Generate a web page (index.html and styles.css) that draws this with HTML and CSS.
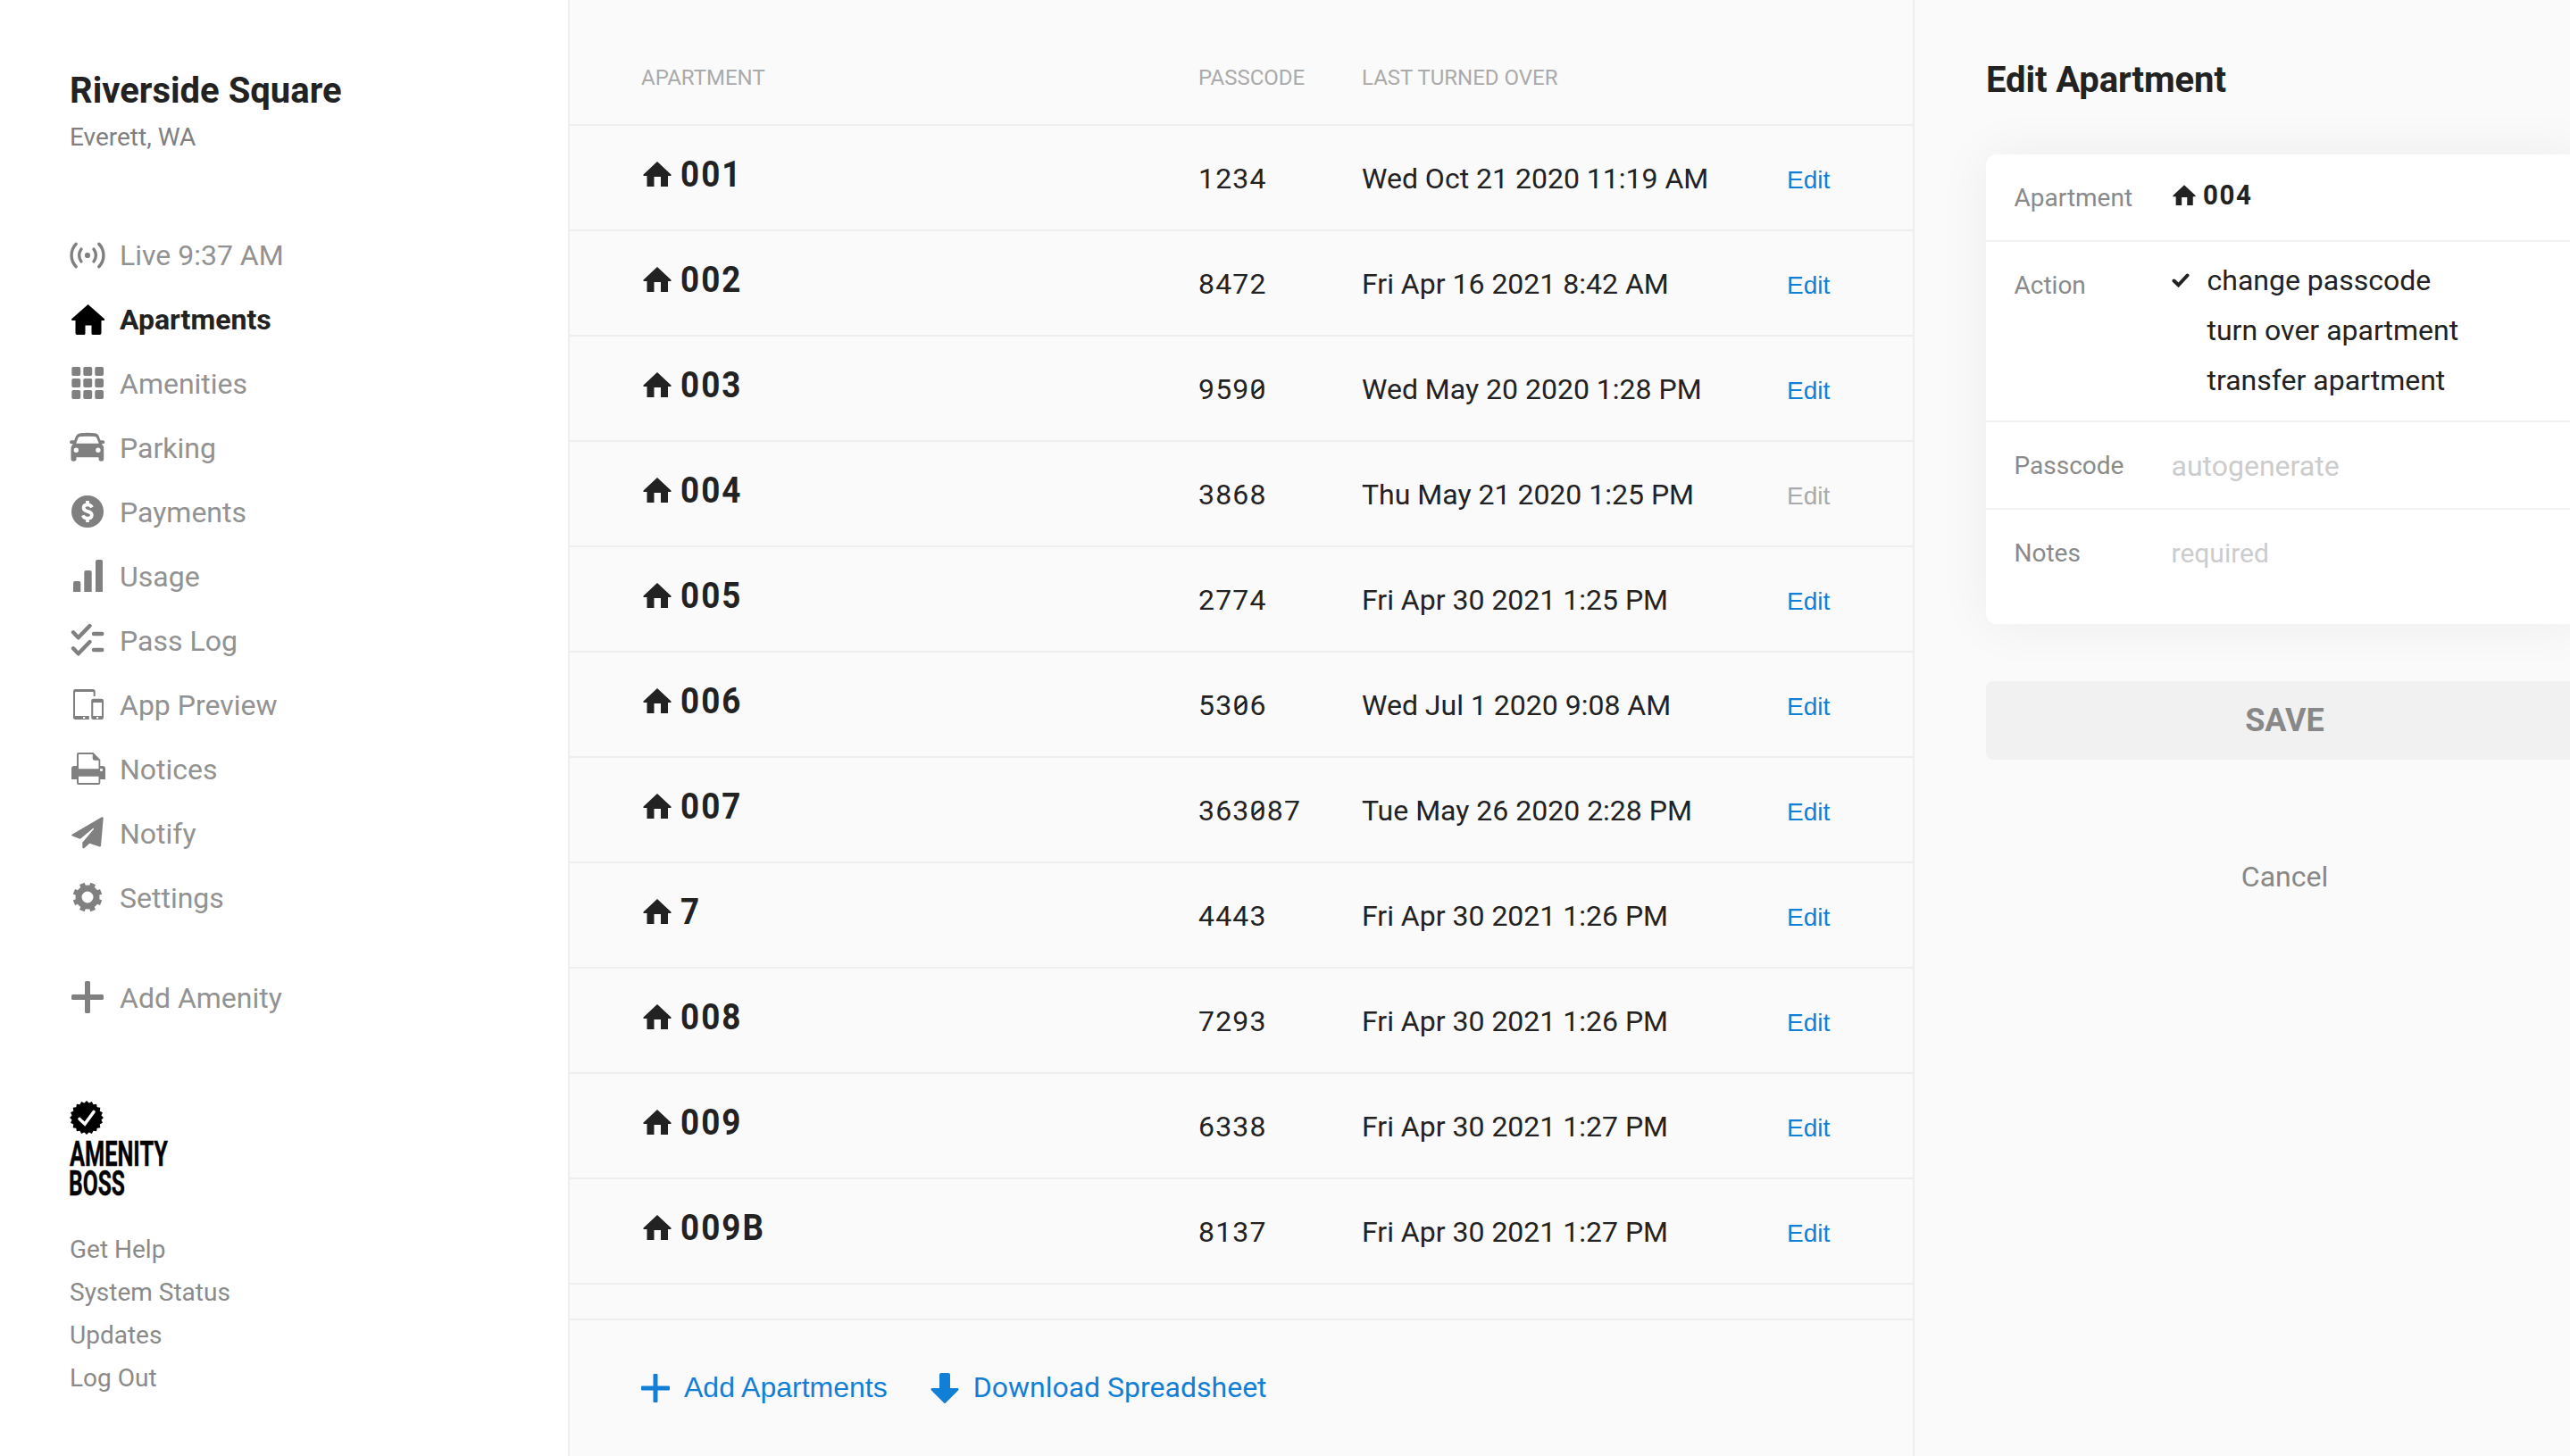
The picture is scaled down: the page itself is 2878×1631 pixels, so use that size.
FILE: index.html
```
<!DOCTYPE html>
<html lang="en">
<head>
    <meta charset="UTF-8">
    <meta name="viewport" content="width=device-width, initial-scale=1.0">
    <title>Apartments - Riverside Square</title>
    <link rel="stylesheet" href="styles.css">
</head>
<body>

<!-- shared icons -->
<svg class="sprite">
    <symbol id="home" viewBox="0 0 32 28">
        <path d="M16 0 L31.5 14.6 V16 H28 V28 H20 V17 H12.500 V28 H4.500 V16 H0.500 V14.600 Z"/>
    </symbol>
</svg>

<div class="app">

    <aside class="sidebar">
        <h1 class="property-name">Riverside Square</h1>
        <p class="property-city">Everett, WA</p>

        <nav class="nav">
            <a class="nav-item">
                <svg class="icon" viewBox="0 0 40 40"><circle cx="20" cy="20" r="3.1"/><path class="line thin" d="M13 13a11.500 11.500 0 0 0 0 14M27 13a11.500 11.500 0 0 1 0 14M7.200 7.200a18.500 18.500 0 0 0 0 25.600M32.800 7.200a18.500 18.500 0 0 1 0 25.600"/></svg>
                Live 9:37 AM
            </a>
            <a class="nav-item active">
                <svg class="icon" viewBox="0 0 40 40"><path d="M20.600 3 39 19.300q.8 1.700-.8 1.700H35.500V35q0 2-2 2H26q-1.500 0-1.500-1.500V26.500H17.500V35.500q0 1.500-1.500 1.500H8.500q-2 0-2-2V21H3q-1.700 0-.8-1.700Z"/></svg>
                Apartments
            </a>
            <a class="nav-item">
                <svg class="icon" viewBox="0 0 40 40"><path d="M4 1h6.500q1.700 0 1.700 1.700v6.600q0 1.700-1.700 1.700H4q-1.700 0-1.700-1.700V2.700Q2.300 1 4 1zm13 0h6.500q1.700 0 1.700 1.700v6.600q0 1.700-1.700 1.700H17q-1.700 0-1.700-1.700V2.700Q15.300 1 17 1zm13 0h6.300Q38 1 38 2.700v6.600Q38 11 36.300 11H30q-1.700 0-1.700-1.700V2.700Q28.300 1 30 1zM4 14h6.500q1.700 0 1.700 1.700v6.600q0 1.700-1.700 1.700H4q-1.700 0-1.700-1.700v-6.600Q2.300 14 4 14zm13 0h6.500q1.700 0 1.700 1.700v6.600q0 1.700-1.700 1.700H17q-1.700 0-1.700-1.700v-6.600Q15.300 14 17 14zm13 0h6.300q1.700 0 1.700 1.700v6.600q0 1.700-1.700 1.700H30q-1.700 0-1.700-1.700v-6.600Q28.300 14 30 14zM4 27h6.500q1.700 0 1.700 1.700v6.600q0 1.700-1.700 1.700H4q-1.700 0-1.700-1.700v-6.600Q2.300 27 4 27zm13 0h6.500q1.700 0 1.700 1.700v6.600q0 1.700-1.700 1.700H17q-1.700 0-1.700-1.700v-6.600Q15.300 27 17 27zm13 0h6.300q1.700 0 1.700 1.700v6.600q0 1.700-1.700 1.700H30q-1.700 0-1.700-1.700v-6.600Q28.300 27 30 27z"/></svg>
                Amenities
            </a>
            <a class="nav-item">
                <svg class="icon" viewBox="0 0 40 40"><path fill-rule="evenodd" d="M12 3.300q8-.9 16 0 3.500.4 4.800 3.500l1.700 4.500H37q2.300 0 2.300 2t-2.300 2h-1.200q2.400 2 2.400 5.500V32q0 2.700-2.800 2.700T32.500 32v-1.700h-25V32q0 2.700-3 2.700T1.500 32V20.800q0-3.500 2.400-5.500H2.300q-2.300 0-2.300-2t2.300-2h2.900l1.700-4.500Q8.500 3.700 12 3.300zM12 7q-1.800.1-2.400 1.600L7.200 14.700h25.500L30.300 8.600Q29.800 7.100 28 7q-8-.7-16 0zM7.300 19.600a2.700 2.700 0 1 0 0 5.400 2.700 2.700 0 0 0 0-5.400zm24.600 0a2.700 2.700 0 1 0 0 5.400 2.700 2.700 0 0 0 0-5.400z"/></svg>
                Parking
            </a>
            <a class="nav-item">
                <svg class="icon" viewBox="0 0 40 40"><circle cx="20" cy="19" r="18"/><path class="cut" d="M20 7v4M20 27v4M25 14.300Q23.500 11.300 20 11.300 15.600 11.300 15.600 14.800 15.600 18 20 18.800 24.800 19.800 24.800 23 24.800 26.700 20 26.700 16 26.700 14.800 23.400"/></svg>
                Payments
            </a>
            <a class="nav-item">
                <svg class="icon" viewBox="0 0 40 40"><path d="M4 37V27q0-2 2-2h4.300q2 0 2 2v10zM16.300 37V15q0-2 2-2h4.400q2 0 2 2v22zM29 37V3q0-2 2-2h4q2 0 2 2v34z"/></svg>
                Usage
            </a>
            <a class="nav-item">
                <svg class="icon" viewBox="0 0 40 40"><path class="line check" d="M4 10.300 9.700 16.300 22.500 3M4 28.300 9.700 34.300 22.500 21M27 12h9.300M27 30h9.300"/></svg>
                Pass Log
            </a>
            <a class="nav-item">
                <svg class="icon" viewBox="0 0 40 40"><path fill-rule="evenodd" d="M6.500 2H26q2.700 0 2.700 2.700V10h-2V6q0-1-1-1H7q-1 0-1 1v26h15.800v4H6.500Q4 36 4 33.500v-29Q4 2 6.500 2zM15 33v2h2.200v-2zM26.500 12.700h9.300q2.200 0 2.200 2.200v18.900q0 2.200-2.200 2.200h-9.300q-2.300 0-2.300-2.200V14.900q0-2.200 2.300-2.200zM26.300 17v15h9.700V17zm3.700 16v2h2.200v-2z"/></svg>
                App Preview
            </a>
            <a class="nav-item">
                <svg class="icon" viewBox="0 0 40 40"><path fill-rule="evenodd" d="M10 1H26.500L34.300 9v7H37q3 0 3 3V31H34.300v4q0 2-2 2H10q-2 0-2-2v-4H2V19q0-3 3-3H8V3q0-2 2-2zM10 3v16.300H32.500V9.700H28q-2.300 0-2.300-2.300V3zm0 24.700V35H32.500v-7.300zM35.500 18.800a1.600 1.600 0 1 0 0 3.200 1.600 1.600 0 0 0 0-3.200z"/></svg>
                Notices
            </a>
            <a class="nav-item">
                <svg class="icon" viewBox="0 0 40 40"><path d="M36 1.300q1.900-.6 1.700 1.500L35 33.500q-.2 1.200-1.500.9L22.300 30.700 16.500 36q-2.200.8-2.200-1V29.700L27 14.800Q27.300 13.300 26 14.100L12.500 25.300q-.8.6-1.800.2L2.600 22.300q-1.200-.7 0-1.600z"/></svg>
                Notify
            </a>
            <a class="nav-item">
                <svg class="icon" viewBox="0 0 40 40"><circle class="gear-ring" cx="20" cy="19" r="10"/><path class="gear-teeth" d="M24.200 8.800 26.200 3.900M15.800 8.800 13.800 3.900M24.200 29.200 26.200 34.100M15.800 29.200 13.800 34.100M30.200 14.800 35.100 12.800M30.200 23.200 35.100 25.200M9.800 14.800 4.900 12.800M9.800 23.200 4.900 25.200"/></svg>
                Settings
            </a>
            <a class="nav-item add-amenity">
                <svg class="icon" viewBox="0 0 40 40"><path d="M18.500 1h3q1.500 0 1.500 1.500V16h13.500Q38 16 38 17.500v3q0 1.500-1.500 1.500H23v13.500q0 1.500-1.500 1.500h-3q-1.500 0-1.500-1.500V22H3.500Q2 22 2 20.500v-3Q2 16 3.500 16H17V2.500Q17 1 18.500 1z"/></svg>
                Add Amenity
            </a>
        </nav>

        <svg class="logo" viewBox="0 0 112 108">
            <g transform="translate(19 19)">
                <rect x="-13.4" y="-13.4" width="26.800" height="26.800" transform="rotate(9)"/>
                <rect x="-13.4" y="-13.4" width="26.800" height="26.800" transform="rotate(27)"/>
                <rect x="-13.4" y="-13.4" width="26.800" height="26.800" transform="rotate(45)"/>
                <rect x="-13.4" y="-13.4" width="26.800" height="26.800" transform="rotate(63)"/>
                <rect x="-13.4" y="-13.4" width="26.800" height="26.800" transform="rotate(81)"/>
            </g>
            <path class="seal-check" d="M11 20.500 17 26 27 12.500"/>
            <text x="0" y="72.500" textLength="110" lengthAdjust="spacingAndGlyphs">AMENITY</text>
            <text x="-1" y="106" textLength="63" lengthAdjust="spacingAndGlyphs">BOSS</text>
        </svg>

        <div class="links">
            <a>Get Help</a>
            <a>System Status</a>
            <a>Updates</a>
            <a>Log Out</a>
        </div>
    </aside>

    <main class="apartments">
        <div class="row head">
            <span>APARTMENT</span>
            <span>PASSCODE</span>
            <span>LAST TURNED OVER</span>
        </div>
        <div class="list">
            <div class="row">
                <b class="unit"><svg class="home"><use href="#home"/></svg><span>001</span></b>
                <span class="code">1234</span>
                <span class="date">Wed Oct 21 2020 11:19 AM</span>
                <a class="edit">Edit</a>
            </div>
            <div class="row">
                <b class="unit"><svg class="home"><use href="#home"/></svg><span>002</span></b>
                <span class="code">8472</span>
                <span class="date">Fri Apr 16 2021 8:42 AM</span>
                <a class="edit">Edit</a>
            </div>
            <div class="row">
                <b class="unit"><svg class="home"><use href="#home"/></svg><span>003</span></b>
                <span class="code">959<i>0</i></span>
                <span class="date">Wed May 20 2020 1:28 PM</span>
                <a class="edit">Edit</a>
            </div>
            <div class="row">
                <b class="unit"><svg class="home"><use href="#home"/></svg><span>004</span></b>
                <span class="code">3868</span>
                <span class="date">Thu May 21 2020 1:25 PM</span>
                <a class="edit disabled">Edit</a>
            </div>
            <div class="row">
                <b class="unit"><svg class="home"><use href="#home"/></svg><span>005</span></b>
                <span class="code">2774</span>
                <span class="date">Fri Apr 30 2021 1:25 PM</span>
                <a class="edit">Edit</a>
            </div>
            <div class="row">
                <b class="unit"><svg class="home"><use href="#home"/></svg><span>006</span></b>
                <span class="code">53<i>0</i>6</span>
                <span class="date">Wed Jul 1 2020 9:08 AM</span>
                <a class="edit">Edit</a>
            </div>
            <div class="row">
                <b class="unit"><svg class="home"><use href="#home"/></svg><span>007</span></b>
                <span class="code">363<i>0</i>87</span>
                <span class="date">Tue May 26 2020 2:28 PM</span>
                <a class="edit">Edit</a>
            </div>
            <div class="row">
                <b class="unit"><svg class="home"><use href="#home"/></svg><span>7</span></b>
                <span class="code">4443</span>
                <span class="date">Fri Apr 30 2021 1:26 PM</span>
                <a class="edit">Edit</a>
            </div>
            <div class="row">
                <b class="unit"><svg class="home"><use href="#home"/></svg><span>008</span></b>
                <span class="code">7293</span>
                <span class="date">Fri Apr 30 2021 1:26 PM</span>
                <a class="edit">Edit</a>
            </div>
            <div class="row">
                <b class="unit"><svg class="home"><use href="#home"/></svg><span>009</span></b>
                <span class="code">6338</span>
                <span class="date">Fri Apr 30 2021 1:27 PM</span>
                <a class="edit">Edit</a>
            </div>
            <div class="row">
                <b class="unit"><svg class="home"><use href="#home"/></svg><span>009B</span></b>
                <span class="code">8137</span>
                <span class="date">Fri Apr 30 2021 1:27 PM</span>
                <a class="edit">Edit</a>
            </div>
        </div>
        <footer class="actions">
            <a class="action add">
                <svg class="action-icon" viewBox="0 0 32 34"><path d="M14.500 1h3q1 0 1 1v12.500H31q1 0 1 1v3q0 1-1 1H18.500V32q0 1-1 1h-3q-1 0-1-1V19.500H1q-1 0-1-1v-3q0-1 1-1h12.500V2q0-1 1-1z"/></svg>
                Add Apartments
            </a>
            <a class="action download">
                <svg class="action-icon" viewBox="0 0 32 34"><path d="M12 0h8q2 0 2 2v15h8q2.500.3 1 2.500L17 33.500q-1 1-2 0L1 19.500Q-.5 17.300 2 17h8V2q0-2 2-2z"/></svg>
                Download Spreadsheet
            </a>
        </footer>
    </main>

    <section class="editor">
        <h2 class="editor-title">Edit Apartment</h2>
        <div class="card">
            <div class="field">
                <span class="label">Apartment</span>
                <b class="unit small"><svg class="home"><use href="#home"/></svg><span>004</span></b>
            </div>
            <div class="field field-action">
                <span class="label">Action</span>
                <ul class="options">
                    <li><svg class="tick" viewBox="0 0 20 16"><path d="M2.500 8.500 7.500 13.300 17.500 2.500"/></svg>change passcode</li>
                    <li>turn over apartment</li>
                    <li>transfer apartment</li>
                </ul>
            </div>
            <div class="field">
                <span class="label">Passcode</span>
                <span class="placeholder">autogenerate</span>
            </div>
            <div class="field field-notes">
                <span class="label">Notes</span>
                <span class="placeholder notes">required</span>
            </div>
        </div>
        <button class="save">SAVE</button>
        <a class="cancel">Cancel</a>
    </section>

</div>

</body>
</html>
```

FILE: styles.css
```
* {
    box-sizing: border-box;
}
body {
    margin: 0;
    font-family: Roboto, sans-serif;
    font-size: 32px;
    color: #222;
    background-color: #fafafa;
    overflow: hidden;
}
h1, h2, p, ul {
    margin: 0;
    padding: 0;
}
.sprite {
    display: none;
}
.app {
    display: flex;
    height: 1631px;
}

/* Sidebar */
.sidebar {
    flex: none;
    width: 638px;
    padding: 78px 78px 0;
    background-color: #fff;
    border-right: 2px solid #eee;
}
.property-name {
    font-size: 40px;
    line-height: 48px;
}
.property-city {
    margin-top: 10px;
    font-size: 28px;
    line-height: 36px;
    color: #808080;
}
.nav {
    margin-top: 78px;
}
.nav-item {
    display: flex;
    align-items: center;
    gap: 16px;
    height: 72px;
    color: #929292;
}
.nav-item.active {
    color: #222;
    font-weight: bold;
}
.nav-item.active .icon {
    fill: #000;
}
.add-amenity {
    margin-top: 40px;
}
.icon {
    width: 40px;
    height: 40px;
    fill: #808080;
}
.line {
    fill: none;
    stroke: #808080;
    stroke-linecap: round;
    stroke-linejoin: round;
}
.thin {
    stroke-width: 3.4;
}
.check {
    stroke-width: 4.4;
}
.cut {
    fill: none;
    stroke: #fff;
    stroke-width: 3.8;
}
.gear-ring {
    fill: none;
    stroke: #808080;
    stroke-width: 7;
}
.gear-teeth {
    stroke: #808080;
    stroke-width: 6;
}
.logo {
    display: block;
    width: 112px;
    height: 108px;
    margin-top: 79px;
    overflow: visible;
}
.logo text {
    font-size: 39px;
    font-weight: bold;
    stroke: #000;
    stroke-width: 0.4;
}
.seal-check {
    fill: none;
    stroke: #fff;
    stroke-width: 3.6;
    stroke-linecap: round;
}
.links {
    display: flex;
    flex-direction: column;
    margin-top: 35px;
    font-size: 28px;
    line-height: 48px;
    color: #8a8a8a;
}

/* Apartment list */
.apartments {
    flex: none;
    display: flex;
    flex-direction: column;
    width: 1506px;
    border-right: 2px solid #eee;
}
.row {
    display: grid;
    grid-template-columns: 624px 183px 476px 1fr;
    align-items: center;
    height: 118px;
    padding-left: 80px;
    border-bottom: 2px solid #eee;
}
.head {
    height: 141px;
    padding-top: 34px;
    font-size: 24px;
    color: #aaa;
}
.list {
    flex: 1;
}
.unit {
    display: flex;
    align-items: center;
    gap: 10px;
    padding-bottom: 8px;
    font-size: 40px;
}
/* narrow digits */
.unit span {
    transform: scaleX(0.92);
    transform-origin: left;
    letter-spacing: 0.055em;
}
.home {
    width: 32px;
    height: 28px;
    margin-left: 2px;
    fill: #222;
}
.code {
    padding-top: 2px;
    letter-spacing: 1.2px;
}
/* slashed zero */
.code i {
    font-style: normal;
    background: linear-gradient(to bottom right, transparent 41%, #222 43%, #222 57%, transparent 59%) 4px 14px / 11px 10px no-repeat;
}
.date {
    padding-top: 2px;
}
.edit {
    padding-top: 6px;
    font-family: "Liberation Sans", Arial, sans-serif;
    font-size: 28px;
    color: #127fd6;
}
.edit.disabled {
    color: #aaa;
}
.actions {
    display: flex;
    align-items: center;
    height: 154px;
    padding: 0 80px 2px;
    border-top: 2px solid #eee;
}
.action {
    display: flex;
    align-items: center;
    gap: 16px;
    color: #127fd6;
}
.add {
    font-family: "Liberation Sans", Arial, sans-serif;
}
.download {
    margin-left: 48px;
}
.action-icon {
    width: 32px;
    height: 34px;
    margin-top: 2px;
    fill: #127fd6;
}

/* Edit panel, runs past the right edge of the window */
.editor {
    flex: none;
    width: 829px;
    padding: 66px 80px 0;
}
.editor-title {
    font-size: 40px;
    line-height: 48px;
    letter-spacing: -0.1px;
}
.card {
    margin-top: 59px;
    background-color: #fff;
    border-radius: 12px;
    box-shadow: 0 0 60px rgba(0, 0, 0, 0.06);
}
.field {
    display: flex;
    height: 98px;
    padding: 29px 31.5px 0;
    border-bottom: 2px solid #f2f2f2;
}
.label {
    width: 176px;
    font-size: 28px;
    line-height: 40px;
    color: #8a8a8a;
}
.unit.small {
    gap: 8px;
    height: 38px;
    padding-bottom: 6px;
    font-size: 32px;
}
.small .home {
    width: 26px;
    height: 23px;
    margin-left: 1px;
}
.field-action {
    height: 202px;
}
.options {
    margin-top: -14px;
    list-style: none;
    line-height: 56px;
}
.options li {
    padding-left: 40px;
}
.tick {
    float: left;
    width: 20px;
    height: 16px;
    margin: 20px 0 0 -40px;
    fill: none;
    stroke: #222;
    stroke-width: 4;
    stroke-linecap: round;
}
.placeholder {
    line-height: 40px;
    color: #ccc;
}
.notes {
    font-size: 30px;
}
.field-notes {
    height: 128px;
    border-bottom: none;
}
.save {
    display: block;
    width: 100%;
    height: 88px;
    margin-top: 64px;
    border: none;
    border-radius: 8px;
    background-color: #f1f1f1;
    font-family: inherit;
    font-size: 36px;
    font-weight: bold;
    color: #888;
}
.cancel {
    display: block;
    margin-top: 111px;
    line-height: 40px;
    text-align: center;
    color: #888;
}
```
